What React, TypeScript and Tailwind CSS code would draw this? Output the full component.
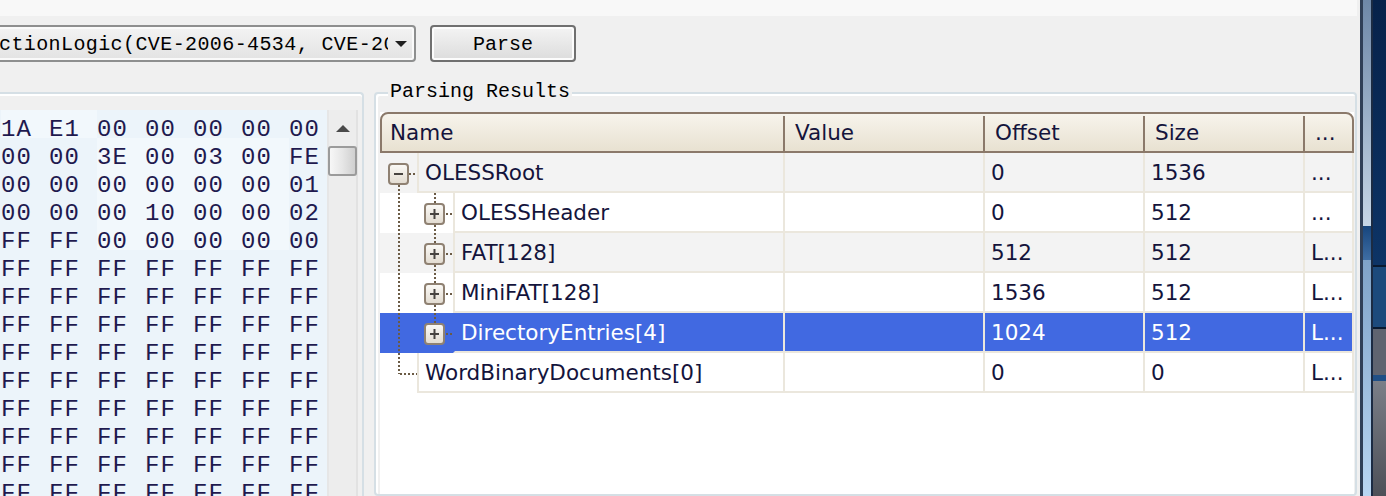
import React from "react";

type HexRow = string[];

const hexRows: HexRow[] = [
  ["1A", "E1", "00", "00", "00", "00", "00"],
  ["00", "00", "3E", "00", "03", "00", "FE"],
  ["00", "00", "00", "00", "00", "00", "01"],
  ["00", "00", "00", "10", "00", "00", "02"],
  ["FF", "FF", "00", "00", "00", "00", "00"],
  ...Array.from({ length: 9 }, () => ["FF", "FF", "FF", "FF", "FF", "FF", "FF"]),
];

// lighter cells in the first rows of the hex view
const lightCells: Record<number, number[]> = {
  0: [0, 1],
  1: [2, 3, 4, 5],
  2: [2, 3, 4, 5],
  3: [2, 3, 4, 5],
  4: [2, 3, 4, 5],
};

type TreeShape = "root" | "child" | "lastChild" | "lastRoot";

interface ResultRow {
  name: string;
  shape: TreeShape;
  offset: string;
  size: string;
  extra: string;
  tone: "gray" | "white" | "selected";
}

const rows: ResultRow[] = [
  { name: "OLESSRoot", shape: "root", offset: "0", size: "1536", extra: "...", tone: "gray" },
  { name: "OLESSHeader", shape: "child", offset: "0", size: "512", extra: "...", tone: "white" },
  { name: "FAT[128]", shape: "child", offset: "512", size: "512", extra: "L...", tone: "gray" },
  { name: "MiniFAT[128]", shape: "child", offset: "1536", size: "512", extra: "L...", tone: "white" },
  { name: "DirectoryEntries[4]", shape: "lastChild", offset: "1024", size: "512", extra: "L...", tone: "selected" },
  { name: "WordBinaryDocuments[0]", shape: "lastRoot", offset: "0", size: "0", extra: "L...", tone: "white" },
];

const DOT = "#6b5b45";

const Expander = ({ x, minus }: { x: number; minus?: boolean }) => (
  <g>
    <defs>
      <linearGradient id={`exp-${x}`} x1="0" y1="0" x2="0" y2="1">
        <stop offset="0" stopColor="#fbfaf7" />
        <stop offset="1" stopColor="#e2dbd0" />
      </linearGradient>
    </defs>
    <rect x={x + 1} y={11} width={19} height={20} rx={3} fill={`url(#exp-${x})`} stroke="#8f8172" strokeWidth={2} />
    <line x1={x + 6} y1={21} x2={x + 15} y2={21} stroke="#474340" strokeWidth={2} />
    {!minus && <line x1={x + 10.5} y1={16} x2={x + 10.5} y2={26} stroke="#474340" strokeWidth={2} />}
  </g>
);

const TreeGutter = ({ shape }: { shape: TreeShape }) => {
  const wide = shape === "child" || shape === "lastChild";
  const w = wide ? 73 : 37;
  return (
    <svg width={w} height={40} className="shrink-0">
      {shape === "root" && (
        <>
          <line x1={19} y1={32} x2={19} y2={40} stroke={DOT} strokeWidth={2} strokeDasharray="2 2" />
          <line x1={29} y1={21} x2={37} y2={21} stroke={DOT} strokeWidth={2} strokeDasharray="2 2" />
          <Expander x={8} minus />
        </>
      )}
      {wide && (
        <>
          <line x1={19} y1={0} x2={19} y2={40} stroke={DOT} strokeWidth={2} strokeDasharray="2 2" />
          <line x1={55} y1={0} x2={55} y2={shape === "child" ? 40 : 10} stroke={DOT} strokeWidth={2} strokeDasharray="2 2" />
          <line x1={66} y1={21} x2={73} y2={21} stroke={DOT} strokeWidth={2} strokeDasharray="2 2" />
          <Expander x={44} />
        </>
      )}
      {shape === "lastRoot" && (
        <>
          <line x1={19} y1={0} x2={19} y2={21} stroke={DOT} strokeWidth={2} strokeDasharray="2 2" />
          <line x1={20} y1={21} x2={37} y2={21} stroke={DOT} strokeWidth={2} strokeDasharray="2 2" />
        </>
      )}
    </svg>
  );
};

const Toolbar = () => (
  <div className="mt-[9px] flex h-[37px] shrink-0 font-['Liberation_Mono',monospace] text-[20px] text-black">
    {/* combo box, scrolled off to the left */}
    <div className="-ml-[6px] flex w-[422px] rounded-[4px] border-2 border-[#8e8f8f] bg-gradient-to-b from-[#f3f3f3] to-[#e3e3e3] shadow-[inset_0_0_0_2px_#fafafa]">
      <div className="flex w-[392px] items-center overflow-hidden whitespace-nowrap pl-[3px] pt-[2px] tracking-[0.4px]">
        ctionLogic(CVE-2006-4534, CVE-2006-2492)
      </div>
      <div className="flex flex-1 items-center justify-center">
        <svg width="12" height="8" viewBox="0 0 12 8">
          <polygon points="0,1 12,1 6,7" fill="#1e1e1e" />
        </svg>
      </div>
    </div>
    <button className="ml-[14px] w-[146px] rounded-[4px] border-2 border-[#707070] bg-gradient-to-b from-[#f4f4f4] to-[#dcdcdc] pt-[2px] shadow-[inset_0_0_0_2px_#fcfcfc] font-['Liberation_Mono',monospace] text-[20px]">
      Parse
    </button>
  </div>
);

const HexGroup = () => (
  <div className="flex w-[364px] shrink-0 rounded-tr-[4px] border-r-2 border-t-2 border-[#d5dfe5] pt-[16px] shadow-[inset_0_2px_0_#ffffff]">
    <div className="w-[327px] bg-[#ecf4fa] pl-[1px] font-['Liberation_Mono',monospace] text-[24px] tracking-[1px] text-[#1f1a4f]">
      {hexRows.map((r, i) => (
        <div key={i} className="flex h-[28px] leading-[40px]">
          {r.map((b, j) => (
            <div key={j} className={`w-[48px] shrink-0 ${lightCells[i]?.includes(j) ? "bg-[#f2f8fc]" : ""}`}>
              {b}
            </div>
          ))}
        </div>
      ))}
    </div>
    {/* vertical scrollbar */}
    <div className="flex w-[31px] flex-col items-center border-x-2 border-l-[#e6e6e6] border-r-[#e2e2e2] bg-[#ededed]">
      <svg width="16" height="8" viewBox="0 0 16 8" className="mt-[15px]">
        <polygon points="1,7 15,7 8,0" fill="#4a4a4a" />
      </svg>
      <div className="mt-[13px] h-[30px] w-[29px] rounded-[3px] border-2 border-[#9b9b9b] bg-gradient-to-r from-[#f7f7f7] via-[#e6e6e6] to-[#cfcfcf]" />
    </div>
  </div>
);

const cellBorder = "border-[#ebe7dd]";

const ResultsGroup = () => (
  <div className="flex w-[983px] shrink-0 flex-col rounded-[4px] border-2 border-[#d5dfe5] pl-[4px] pr-[1px] shadow-[inset_2px_2px_0_#ffffff]">
    <div className="-mt-[12px] ml-[8px] self-start bg-[#f0f0f0] px-[2px] font-['Liberation_Mono',monospace] text-[20px] leading-[20px] text-black">
      Parsing Results
    </div>
    <div className="mt-[10px] flex flex-1 flex-col bg-white font-['DejaVu_Sans',sans-serif] text-[21.5px] text-[#14143c]">
      {/* header */}
      <div className="flex h-[41px] shrink-0 rounded-t-[8px] border-2 border-[#8b796a] bg-gradient-to-b from-[#f7f4ec] to-[#e8e1d1] pt-[2px]">
        <div className="flex w-[401px] items-center pl-[8px]">Name</div>
        <div className="flex w-[200px] items-center border-l-2 border-[#8b796a] pl-[10px]">Value</div>
        <div className="flex w-[160px] items-center border-l-2 border-[#8b796a] pl-[10px]">Offset</div>
        <div className="flex w-[160px] items-center border-l-2 border-[#8b796a] pl-[10px]">Size</div>
        <div className="flex flex-1 items-center rounded-tr-[6px] border-l-2 border-[#8b796a] pl-[10px]">...</div>
      </div>
      {/* rows */}
      {rows.map((row) => {
        const sel = row.tone === "selected";
        const bg = sel ? "bg-[#4169e1] text-white" : row.tone === "gray" ? "bg-[#f3f3f3]" : "bg-white";
        const nameW = row.shape === "child" || row.shape === "lastChild" ? "w-[330px]" : "w-[366px]";
        return (
          <div key={row.name} className={`flex h-[40px] shrink-0 ${bg}`}>
            <TreeGutter shape={row.shape} />
            <div className={`flex ${nameW} items-center border-b-2 border-l-2 ${cellBorder} ${sel ? "border-l-[#4169e1]" : ""} pl-[6px] pt-[2px] whitespace-nowrap`}>
              {row.name}
            </div>
            <div className={`w-[200px] border-b-2 border-l-2 ${cellBorder}`} />
            <div className={`flex w-[160px] items-center border-b-2 border-l-2 ${cellBorder} pl-[6px] pt-[2px]`}>{row.offset}</div>
            <div className={`flex w-[160px] items-center border-b-2 border-l-2 ${cellBorder} pl-[6px] pt-[2px]`}>{row.size}</div>
            <div className={`flex w-[51px] items-center border-x-2 border-b-2 ${cellBorder} pl-[6px] pt-[2px]`}>{row.extra}</div>
          </div>
        );
      })}
    </div>
  </div>
);

const WindowEdge = () => (
  <div className="flex w-[26px] shrink-0">
    <div className="w-[3px] bg-[#2f3f57]" />
    <div className="flex w-[8px] flex-col">
      <div className="h-[226px] bg-gradient-to-b from-[#6e88a8] to-[#c6d6e6]" />
      <div className="h-[34px] bg-gradient-to-b from-[#16457d] to-[#3f6ea3]" />
      <div className="flex-1 bg-gradient-to-b from-[#7fa3c8] to-[#b9d6f2]" />
    </div>
    <div className="w-[2px] bg-[#1b2b43]" />
    <div className="flex flex-1 flex-col">
      <div className="h-[265px] bg-gradient-to-b from-[#07224a] to-[#0d3466]" />
      <div className="h-[64px] border-y-2 border-[#0a1a30] bg-[#1c4a7c]" />
      <div className="h-[46px] bg-[#5f6470]" />
      <div className="h-[6px] bg-[#1f4f86]" />
      <div className="flex-1 bg-gradient-to-b from-[#7b7f88] to-[#4d5058]" />
    </div>
  </div>
);

export default function App() {
  return (
    <div className="flex h-[496px] w-[1386px] overflow-hidden bg-[#f0f0f0]">
      <div className="flex w-[1360px] shrink-0 flex-col">
        <div className="mr-[3px] h-[16px] shrink-0 bg-[#f8f8f8]" />
        <Toolbar />
        <div className="mt-[30px] flex min-h-0 flex-1 gap-[10px]">
          <HexGroup />
          <ResultsGroup />
        </div>
      </div>
      <WindowEdge />
    </div>
  );
}
